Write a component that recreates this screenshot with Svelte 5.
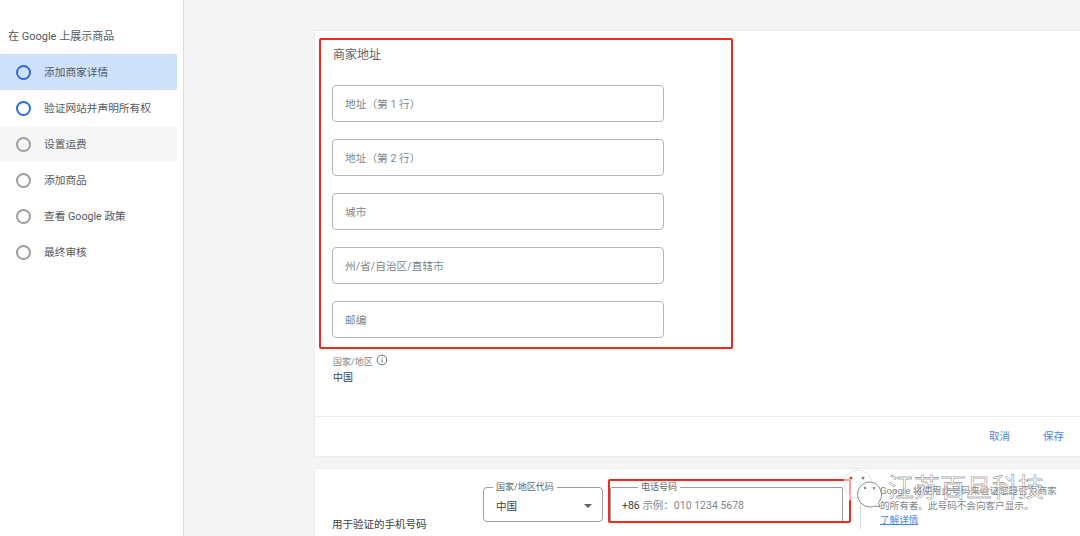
<script>
  const steps = [
    { label: '添加商家详情', state: 'active' },
    { label: '验证网站并声明所有权', state: 'todo' },
    { label: '设置运费', state: 'hover' },
    { label: '添加商品', state: '' },
    { label: '查看 Google 政策', state: '' },
    { label: '最终审核', state: '' }
  ];

  const addressFields = ['地址（第 1 行）', '地址（第 2 行）', '城市', '州/省/自治区/直辖市', '邮编'];
</script>

<div class="page">
  <aside class="sidebar">
    <h2>在 Google 上展示商品</h2>
    <ul>
      {#each steps as step}
        <li class={step.state}>
          <span class="ring"></span>
          <span class="step-label">{step.label}</span>
        </li>
      {/each}
    </ul>
  </aside>

  <main class="main">
    <section class="card address-card">
      <div class="highlight">
        <h3>商家地址</h3>
        {#each addressFields as field}
          <div class="field">{field}</div>
        {/each}
      </div>
      <div class="country">
        <div class="country-label">
          <span>国家/地区</span>
          <svg width="12" height="12" viewBox="0 0 12 12" fill="none" stroke="#70757a">
            <circle cx="6" cy="6" r="4.8" />
            <path d="M6 5.4v3M6 3.4v1" />
          </svg>
        </div>
        <div class="country-value">中国</div>
      </div>
      <div class="actions">
        <span>取消</span>
        <span>保存</span>
      </div>
    </section>

    <section class="card phone-card">
      <div class="phone-title">用于验证的手机号码</div>
      <fieldset class="select">
        <legend>国家/地区代码</legend>
        <span>中国</span>
        <i class="caret"></i>
      </fieldset>
      <div class="phone-highlight">
        <fieldset class="phone">
          <legend>电话号码</legend>
          <span class="prefix">+86</span>
          <span class="hint">示例：010 1234 5678</span>
        </fieldset>
      </div>
      <div class="help">
        <p>Google 将使用此号码来验证您是否为商家<br />的所有者。此号码不会向客户显示。</p>
        <a href="#learn">了解详情</a>
      </div>
    </section>

    <div class="watermark">
      <svg width="44" height="40" viewBox="0 0 44 40" fill="none" stroke-width="1">
        <ellipse cx="14" cy="16" rx="14" ry="14" fill="rgba(255,255,255,.55)" stroke="#e4e4e4" />
        <path d="M6 27l-1 5 6-3" fill="rgba(255,255,255,.55)" stroke="#ddd" />
        <path d="M26 14a12.5 12.5 0 1 0 5 24l5 1-1.500-4.500A12.500 12.500 0 0 0 26 14z" fill="rgba(255,255,255,.5)" stroke="#8a8a8a" />
        <circle cx="7" cy="10" r="1.500" fill="#a55" />
        <circle cx="19" cy="10" r="1.500" fill="#888" />
        <circle cx="21" cy="20" r="1.200" fill="#888" />
        <circle cx="30" cy="20" r="1.200" fill="#888" />
      </svg>
      <span>江苏百旦科技</span>
    </div>
  </main>
</div>

<style>
  :global(body) {
    margin: 0;
    overflow: hidden;
    font-family: Roboto, "Noto Sans CJK SC", sans-serif;
  }
  .page {
    display: flex;
    width: 1080px;
    height: 536px;
    overflow: hidden;
    background: #f4f4f4;
    color: #3c4043;
  }
  .sidebar {
    flex: none;
    width: 183px;
    background: #fff;
    border-right: 1px solid #dadce0;
  }
  .sidebar h2 {
    margin: 0;
    padding: 28px 0 0 8px;
    height: 26px;
    font-size: 11px;
    line-height: 17px;
    font-weight: 400;
    color: #55595d;
  }
  .sidebar ul {
    list-style: none;
    margin: 0;
    padding: 0;
    width: 177px;
  }
  .sidebar li {
    display: flex;
    align-items: center;
    gap: 13px;
    height: 36px;
    padding-left: 16px;
    font-size: 10.7px;
    color: #55595d;
  }
  .step-label {
    margin-top: -1px;
  }
  .sidebar li.active {
    background: #cfe0fb;
  }
  .sidebar li.hover {
    background: #f6f6f6;
  }
  .ring {
    box-sizing: border-box;
    flex: none;
    width: 15px;
    height: 15px;
    border: 2px solid #9e9e9e;
    border-radius: 50%;
  }
  .active .ring,
  .todo .ring {
    border-color: #2f6bdc;
  }
  .main {
    position: relative;
    flex: 1;
    padding: 30px 0 0 130px;
    min-width: 0;
  }
  .card {
    background: #fff;
    border: 1px solid #ececec;
    border-right: 0;
    border-radius: 2px 0 0 2px;
    box-sizing: border-box;
  }
  .address-card {
    height: 427px;
    padding: 7px 0 0 4px;
  }
  .highlight {
    box-sizing: border-box;
    width: 414px;
    height: 311px;
    padding: 6px 0 0 11px;
    border: 2px solid #f2291f;
    border-radius: 2px;
  }
  .highlight h3 {
    margin: 0 0 21px 1px;
    font-size: 12px;
    line-height: 18px;
    font-weight: 400;
    color: #5f6368;
  }
  .field {
    box-sizing: border-box;
    width: 332px;
    height: 37px;
    margin-bottom: 17px;
    padding-left: 12px;
    border: 1px solid #b3b5b8;
    border-radius: 4px;
    font-size: 10.7px;
    line-height: 37px;
    color: #80868b;
  }
  .field:last-child {
    margin-bottom: 0;
  }
  .country {
    padding: 5px 0 0 14px;
    height: 67px;
    box-sizing: border-box;
  }
  .country-label {
    display: flex;
    align-items: center;
    gap: 2px;
    height: 14px;
    font-size: 9px;
    color: #80868b;
  }
  .country-label svg {
    margin: -3px 0 0 1px;
  }
  .country-value {
    margin-top: 2px;
    font-size: 10px;
    line-height: 16px;
    color: #3c4043;
  }
  .actions {
    display: flex;
    justify-content: flex-end;
    gap: 33px;
    margin-left: -4px;
    padding: 12px 16px 0 0;
    height: 40px;
    box-sizing: border-box;
    border-top: 1px solid #ececec;
    font-size: 10.5px;
    line-height: 16px;
    color: #4f86e8;
  }
  .phone-card {
    position: relative;
    display: flex;
    align-items: flex-start;
    height: 100px;
    margin-top: 11px;
    padding: 12px 0 0 17px;
  }
  .phone-title {
    flex: none;
    width: 151px;
    margin-top: 36px;
    font-size: 10.5px;
    line-height: 16px;
  }
  fieldset {
    box-sizing: border-box;
    margin: 0;
    border: 1px solid #9e9e9e;
    border-radius: 4px;
  }
  legend {
    margin-left: -3px;
    padding: 0 3px;
    font-size: 9px;
    line-height: 12px;
    color: #5f6368;
  }
  .select {
    position: relative;
    flex: none;
    width: 120px;
    height: 41px;
    padding: 0 12px;
    font-size: 10.5px;
    line-height: 27px;
  }
  .caret {
    position: absolute;
    right: 10px;
    top: 11px;
    border: 4px solid transparent;
    border-top: 4px solid #5f6368;
    border-bottom: 0;
  }
  .phone-highlight {
    box-sizing: border-box;
    flex: none;
    width: 243px;
    height: 44px;
    margin: -2px 0 0 5px;
    border: 2px solid #f2291f;
    border-radius: 2px;
  }
  .phone {
    width: 233px;
    height: 40px;
    padding: 0 0 0 11px;
    border-width: 1px 1px 0 1px;
    border-radius: 2px 2px 0 0;
    font-size: 10.5px;
    line-height: 26px;
  }
  .phone legend {
    margin-left: 16px;
  }
  .hint {
    color: #80868b;
  }
  .help {
    flex: none;
    width: 178px;
    height: 45px;
    margin: 3px 0 0 9px;
    padding-left: 19px;
    border-left: 1px solid #dadce0;
    font-size: 9.6px;
    line-height: 14.5px;
    color: #80868b;
  }
  .help p {
    margin: 0;
    height: 29px;
    white-space: nowrap;
  }
  .help a {
    color: #4285f4;
  }
  .watermark {
    position: absolute;
    left: 660px;
    top: 468px;
    display: flex;
    align-items: center;
    font-size: 26px;
    line-height: 40px;
    white-space: nowrap;
    color: rgba(255, 255, 255, 0.55);
    -webkit-text-stroke: 0.4px #666;
  }
</style>
